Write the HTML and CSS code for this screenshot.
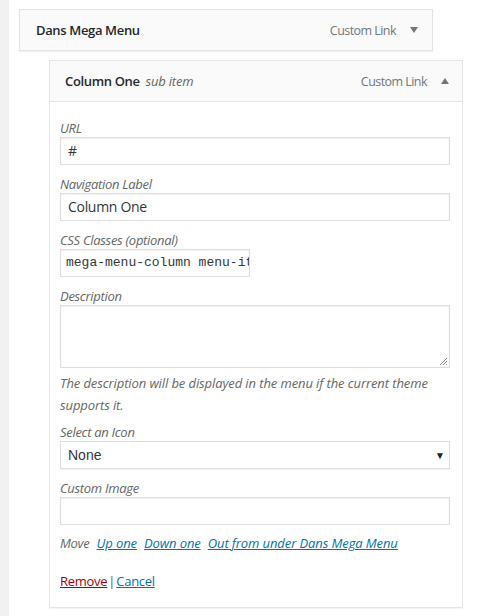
FILE: index.html
```html
<!DOCTYPE html>
<html>
<head>
<meta charset="utf-8">
<link rel="stylesheet" href="styles.css">
</head>
<body>
<div class="page">
  <div class="strip"></div>
  <div class="content">
    <div class="item parent">
      <div class="handle">
        <span class="title">Dans Mega Menu</span>
        <span class="controls"><span class="type">Custom Link</span><span class="arrow down"></span></span>
      </div>
    </div>
    <div class="item child">
      <div class="handle">
        <span class="title">Column One <em class="sub">sub item</em></span>
        <span class="controls"><span class="type">Custom Link</span><span class="arrow up"></span></span>
      </div>
      <div class="settings">
        <div class="field">
          <label class="lbl">URL</label>
          <div class="input">#</div>
        </div>
        <div class="field">
          <label class="lbl">Navigation Label</label>
          <div class="input">Column One</div>
        </div>
        <div class="field">
          <label class="lbl">CSS Classes (optional)</label>
          <div class="input mono">mega-menu-column menu-item</div>
        </div>
        <div class="field">
          <label class="lbl">Description</label>
          <div class="textarea"><svg class="grip" width="9" height="9" viewBox="0 0 9 9"><path d="M8 1 L1 8 M8 4 L4 8 M8 7 L7 8" stroke="#8a8a8a" stroke-width="1"/></svg></div>
          <p class="help">The description will be displayed in the menu if the current theme<br>supports it.</p>
        </div>
        <div class="field">
          <label class="lbl">Select an Icon</label>
          <div class="select"><span>None</span><span class="sel-arrow">▼</span></div>
        </div>
        <div class="field">
          <label class="lbl">Custom Image</label>
          <div class="input"></div>
        </div>
        <div class="move">Move <a href="#">Up one</a> <a href="#">Down one</a> <a href="#">Out from under Dans Mega Menu</a></div>
        <div class="actions"><a href="#" class="remove">Remove</a><span class="sep">|</span><a href="#" class="cancel">Cancel</a></div>
      </div>
    </div>
  </div>
</div>
</body>
</html>
```
FILE: styles.css
```css
* { box-sizing: border-box; }
html, body { margin: 0; padding: 0; background: #fff; }
body { font-family: "Open Sans", "Noto Sans", sans-serif; font-size: 13px; color: #23282d; }
.page { display: flex; min-height: 616px; }
.strip { width: 9px; background: #f1f1f1; flex: none; }
.content { padding: 9px 0 0 10px; display: flex; flex-direction: column; }
.item { width: 414px; }
.parent { margin-bottom: 9px; }
.child { margin-left: 30px; border: 1px solid #e5e5e5; box-shadow: 0 1px 1px rgba(0,0,0,.04); }
.handle { display: flex; justify-content: space-between; align-items: center; background: #fafafa; height: 42px; padding: 0 14px 0 16px; }
.parent .handle { border: 1px solid #e3e3e3; box-shadow: 0 1px 1px rgba(0,0,0,.05); }
.child .handle { height: 41px; border-bottom: 1px solid #e5e5e5; padding-left: 15px; padding-right: 13px; }
.title { font-weight: 600; letter-spacing: -0.35px; }
.sub { font-weight: 400; font-style: italic; color: #666; margin-left: 3px; letter-spacing: -0.2px; }
.controls { display: flex; align-items: center; }
.type { color: #72777c; font-size: 12.5px; letter-spacing: -0.55px; }
.arrow { width: 0; height: 0; border-left: 4px solid transparent; border-right: 4px solid transparent; margin-left: 14px; }
.arrow.down { border-top: 6px solid #72777c; }
.arrow.up { border-bottom: 6px solid #72777c; }
.settings { padding: 17px 12px 0 10px; display: flex; flex-direction: column; }
.field { display: flex; flex-direction: column; margin-bottom: 10px; }
.lbl { font-style: italic; color: #666; line-height: 18px; letter-spacing: -0.3px; }
.input { height: 28px; border: 1px solid #ddd; box-shadow: inset 0 1px 2px rgba(0,0,0,.07); background: #fff; padding: 0 7px; line-height: 26px; font-size: 14px; color: #32373c; white-space: nowrap; overflow: hidden; letter-spacing: -0.3px; }
.input.mono { width: 190px; font-family: "Liberation Mono", "DejaVu Sans Mono", monospace; font-size: 13px; letter-spacing: 0; padding-left: 5px; }
.textarea { height: 63px; border: 1px solid #ddd; box-shadow: inset 0 1px 2px rgba(0,0,0,.07); position: relative; background: #fff; }
.grip { position: absolute; right: 1px; bottom: 1px; }
.help { margin: 4px 0 -3px; font-style: italic; color: #666; font-size: 13px; line-height: 22px; letter-spacing: -0.1px; white-space: nowrap; }
.select { height: 28px; border: 1px solid #ddd; box-shadow: 0 1px 1px rgba(0,0,0,.04); display: flex; justify-content: space-between; align-items: center; padding: 0 4px 0 7px; font-family: "Liberation Sans", Arial, sans-serif; font-size: 14px; color: #32373c; }
.sel-arrow { font-size: 10px; color: #222; }
.move { font-style: italic; color: #666; line-height: 18px; margin-top: -1px; letter-spacing: -0.3px; }
.move a { color: #0073aa; text-decoration: underline; margin-left: 4px; letter-spacing: -0.1px; }
.actions { margin-top: 20px; line-height: 18px; padding-bottom: 17px; }
.actions a { text-decoration: underline; }
.remove { color: #a00; letter-spacing: -0.3px; }
.cancel { color: #0073aa; letter-spacing: -0.3px; }
.sep { color: #555; margin: 0 1px; }
```
